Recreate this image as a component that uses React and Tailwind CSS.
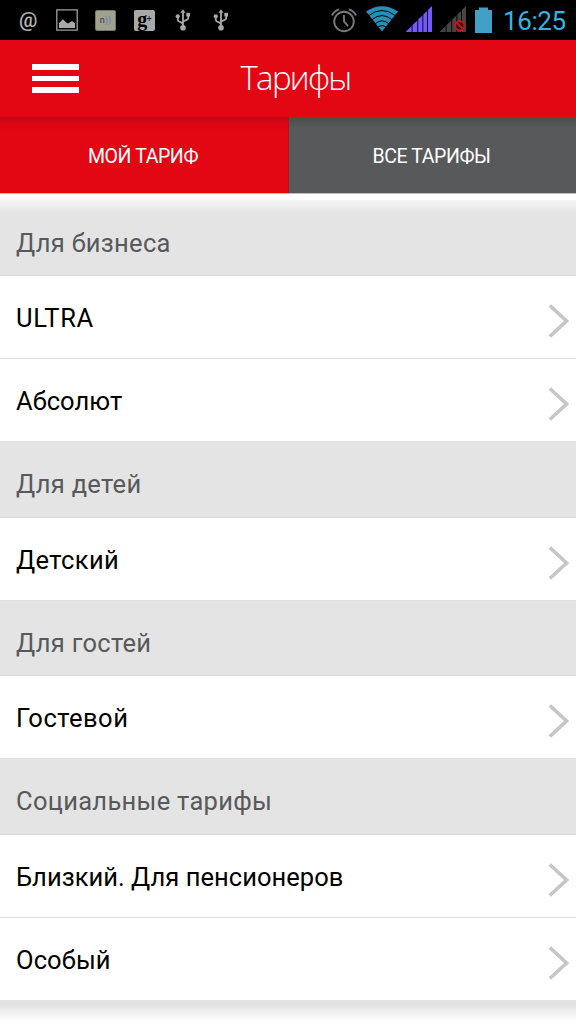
import React, { useState } from 'react';

const sections = [
  {
    title: 'Для бизнеса',
    height: 'h-[76px]',
    items: [
      { name: 'ULTRA', tracking: 'tracking-[0.7px]' },
      { name: 'Абсолют', tracking: 'tracking-normal' },
    ],
  },
  { title: 'Для детей', height: 'h-[76px]', items: [{ name: 'Детский', tracking: 'tracking-[0.4px]' }] },
  { title: 'Для гостей', height: 'h-[75px]', items: [{ name: 'Гостевой', tracking: 'tracking-[0.5px]' }] },
  {
    title: 'Социальные тарифы',
    height: 'h-[76px]',
    items: [
      { name: 'Близкий. Для пенсионеров', tracking: 'tracking-[0.04px]' },
      { name: 'Особый', tracking: 'tracking-[0.1px]' },
    ],
  },
];

const UsbIcon = () => (
  <svg className="h-6 w-4" viewBox="0 0 16 24" fill="none" stroke="#a9a9a9" strokeWidth="1.8">
    <path d="M8 4v15M8 16.2c0-2.2-5.2-1.8-5.2-4.2V8.5M8 14.2c0-2.2 5.2-1.6 5.2-4V6.5" />
    <path d="M8 1.2l2.6 3.6H5.4z" fill="#a9a9a9" stroke="none" />
    <circle cx="8" cy="19.8" r="2.8" fill="#a9a9a9" stroke="none" />
    <circle cx="2.8" cy="8.3" r="2.1" fill="#a9a9a9" stroke="none" />
    <path d="M11.3 4.8h3.7v3.7h-3.7z" fill="#a9a9a9" stroke="none" />
  </svg>
);

const SignalIcon = ({ color, blocked }) => (
  <svg className="h-[26px] w-[26px]" viewBox="0 0 26 26" fill={color}>
    <path d="M0 26v-.6L5.6 20v6zM6.5 26v-7l4.8-4.4V26zM12.2 26V13.4l4.2-4V26zM17.3 26V8.500l3.700-3.500v21zM21.900 26V4L26 0v26z" />
    {blocked && (
      <g fill="none" stroke="#c01818" strokeWidth="2">
        <circle cx="19.800" cy="19.800" r="4.600" fill="#2a1616" />
        <path d="M16.500 16.500l6.600 6.600" />
      </g>
    )}
  </svg>
);

const StatusBar = () => (
  <div className="flex h-10 items-center bg-black">
    <span className="ml-[19px] h-6 w-[20px] font-['Roboto'] text-[20.5px] font-medium leading-[24px] text-[#b4b4b4]">@</span>
    <svg className="ml-[17px] h-[22px] w-[22px]" viewBox="0 0 22 22">
      <path d="M.8.8h20.400v20.400H.8z" fill="none" stroke="#a0a0a0" strokeWidth="1.300" />
      <path d="M3 19v-5l4-3.700 3 2.900 2 1.300 4-2.500 3 2.300V19z" fill="#a9a9a9" />
    </svg>
    <div className="ml-[17px] flex h-[21px] w-[21px] items-center justify-center rounded-[2px] border border-[#777] bg-[#a0a18f] font-['Roboto'] text-[9px] leading-none text-[#34343c]">
      n<span className="text-[#6078b4]">))</span>
    </div>
    <div className="ml-[18px] flex h-[21px] w-[21px] items-center justify-center rounded-[2px] bg-[#a9a9a9] font-['Liberation_Serif'] leading-none text-black">
      <span className="pb-[3px] text-[20px] font-bold">g</span>
      <span className="-ml-px pb-[3px] text-[10px] font-bold">+</span>
    </div>
    <div className="ml-[20px]"><UsbIcon /></div>
    <div className="ml-[22px]"><UsbIcon /></div>
    <svg className="ml-[102px] h-[25px] w-[26px]" viewBox="0 0 26 25" fill="none" stroke="#777" strokeWidth="1.900">
      <circle cx="13" cy="13.500" r="9.800" />
      <path d="M13 7v6.500l4 4.500M1 7.500Q3 3 8 1.300M25 7.500Q23 3 18 1.300" />
    </svg>
    <svg className="ml-[9px] -mt-[3px] h-[26px] w-8" viewBox="0 0 32 26">
      <path d="M0 5.500Q16-5 32 5.500L16 25.500z" fill="#258fb9" />
      <path d="M2.800 9.500Q16-.5 29.200 9.500M6 13.600Q16 5.500 26 13.600M9.200 17.700Q16 12 22.800 17.700M12 21.200Q16 18 20 21.200" fill="none" stroke="#000" strokeWidth="1" />
    </svg>
    <div className="ml-[8px] -mt-[3px]"><SignalIcon color="#7359ff" /></div>
    <div className="ml-[8px] -mt-[3px]"><SignalIcon color="#454545" blocked /></div>
    <svg className="ml-[9px] -mt-px h-[26px] w-[17px]" viewBox="0 0 17 26">
      <path d="M0 3h4V.5h9V3h4v23H0z" fill="#429fc5" />
    </svg>
    <span className="ml-[11px] pt-px font-['Roboto'] text-[26px] leading-none tracking-[-0.4px] text-[#33b5e5]">16:25</span>
  </div>
);

const App = () => {
  const [tab, setTab] = useState('my');

  return (
    <div className="h-[1024px] w-[576px] overflow-hidden bg-white font-['Roboto',sans-serif]">
      <StatusBar />
      <header className="grid h-[77px] grid-cols-[110px_1fr_95px] items-center bg-[#e30613]">
        <button className="ml-[31px] flex w-[48px] flex-col gap-[6px] px-[0.5px]" aria-label="Меню">
          <span className="h-[5.5px] w-full bg-white" />
          <span className="h-[5.5px] w-full bg-white" />
          <span className="h-[5.5px] w-full bg-white" />
        </button>
        <h1 className="pb-[3px] text-center font-['Open_Sans'] text-[33px] font-light leading-none tracking-[-1.7px] text-white">Тарифы</h1>
      </header>
      <nav className="grid h-[76px] grid-cols-[289px_287px] text-[19.5px] tracking-[-0.4px] text-white">
        <button
          onClick={() => setTab('my')}
          aria-selected={tab === 'my'}
          className="border-r border-[#c90a14] bg-[#e30613] bg-linear-to-b from-[#c40612] via-[#dc0613] via-8% to-[#e30613] to-20% pt-[4px] pr-[2px]"
        >
          МОЙ ТАРИФ
        </button>
        <button
          onClick={() => setTab('all')}
          aria-selected={tab === 'all'}
          className="bg-linear-to-b from-[#4a4b4d] to-[#58595b] to-14% pt-[4px] pr-[2px]"
        >
          ВСЕ ТАРИФЫ
        </button>
      </nav>
      <main className="border-t border-[#bdbdbd] pt-[6px]">
        {sections.map((section, i) => (
          <section key={section.title}>
            <h2
              className={`flex items-center border-b border-[#d8d8d8] pl-4 text-[25.5px] leading-none tracking-[0.3px] text-[#58595b] ${section.height} ${
                i === 0 ? 'bg-linear-to-b from-[#f5f5f5] to-[#e4e4e4] to-18% pt-[13px]' : 'bg-[#e4e4e4] pt-[11px]'
              }`}
            >
              {section.title}
            </h2>
            {section.items.map((item) => (
              <div key={item.name} className="flex h-[83px] items-center justify-between border-b border-[#e0e0e0] pl-4 pr-[7px]">
                <span className={`pt-[3px] text-[25.5px] leading-none text-black ${item.tracking}`}>{item.name}</span>
                <svg className="mt-[7px] h-[36px] w-[21px]" viewBox="0 0 21 36" fill="none" stroke="#c6c6c6" strokeWidth="3.6">
                  <path d="M1.800 2.500L18.500 18 1.800 33.500" />
                </svg>
              </div>
            ))}
          </section>
        ))}
        <div className="h-5 bg-linear-to-b from-[#e2e2e2] from-20% to-white" />
      </main>
    </div>
  );
};

export default App;
